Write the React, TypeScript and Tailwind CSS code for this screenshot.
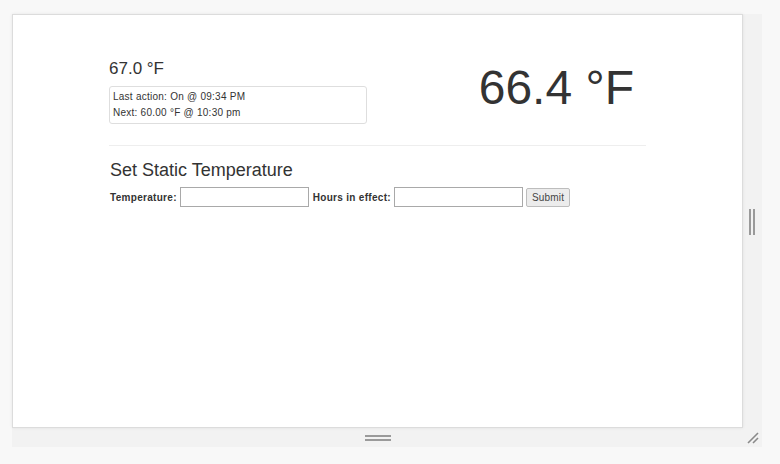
import React from "react";

export default function App() {
  const font = { fontFamily: '"Liberation Sans", Arial, sans-serif' };
  return (
    <div className="w-[780px] h-[464px] bg-[#f8f8f8] pt-[14px] pl-[12px] overflow-hidden" style={font}>
      <div className="w-[750px] h-[433px] bg-[#f2f2f2] flex flex-col">
        <div className="flex h-[414px]">
          <div className="w-[731px] h-[414px] bg-white border border-[#dcdcdc] shadow-[0_0_3px_rgba(0,0,0,0.08)] text-[#333]">
            <div className="w-[537px] mx-auto pt-[44px]">
              <div className="flex justify-between">
                <div className="w-[258px]">
                  <div className="text-[17px] leading-[20px]">67.0 °F</div>
                  <div className="mt-[7px] border border-[#dedede] rounded-[3px] px-[3px] pt-[2px] pb-[2px] text-[10px] leading-[16px] tracking-[0.25px]">
                    <div>Last action: On @ 09:34 PM</div>
                    <div>Next: 60.00 °F @ 10:30 pm</div>
                  </div>
                </div>
                <div className="text-[48px] leading-[56px] pr-[12px] pt-[1px] text-[#333]">66.4 °F</div>
              </div>
              <div className="mt-[21px] border-t border-[#eeeeee]" />
              <div className="text-[18px] leading-[20px] mt-[14px] ml-[1px]">Set Static Temperature</div>
              <div className="flex items-center mt-[7px] ml-[1px] text-[10px] font-bold tracking-[0.3px]">
                <span>Temperature:</span>
                <input className="ml-[3px] w-[129px] h-[20px] border border-[#a9a9a9] bg-white" />
                <span className="ml-[4px]">Hours in effect:</span>
                <input className="ml-[3px] w-[129px] h-[20px] border border-[#a9a9a9] bg-white" />
                <button className="ml-[3px] h-[19px] px-[5px] border border-[#bdbdbd] rounded-[2px] bg-[#ececec] font-normal text-[10px] text-[#444] tracking-[0.2px]">Submit</button>
              </div>
            </div>
          </div>
          <div className="flex-1 flex items-center justify-center">
            <div className="flex gap-[2px] h-[26px] mt-[1px] mr-[1px]">
              <div className="w-[2px] bg-[#9a9a9a]" />
              <div className="w-[2px] bg-[#9a9a9a]" />
            </div>
          </div>
        </div>
        <div className="flex-1 flex">
          <div className="w-[731px] flex flex-col items-center justify-center gap-[2px]">
            <div className="w-[26px] h-[2px] bg-[#9a9a9a]" />
            <div className="w-[26px] h-[2px] bg-[#9a9a9a]" />
          </div>
          <div className="flex-1 flex items-center justify-center">
            <svg width="14" height="14" viewBox="0 0 14 14" className="mt-[1px]">
              <line x1="2" y1="12" x2="12" y2="2" stroke="#8a8a8a" strokeWidth="1.6" />
              <line x1="7" y1="12" x2="12" y2="7" stroke="#8a8a8a" strokeWidth="1.6" />
            </svg>
          </div>
        </div>
      </div>
    </div>
  );
}
